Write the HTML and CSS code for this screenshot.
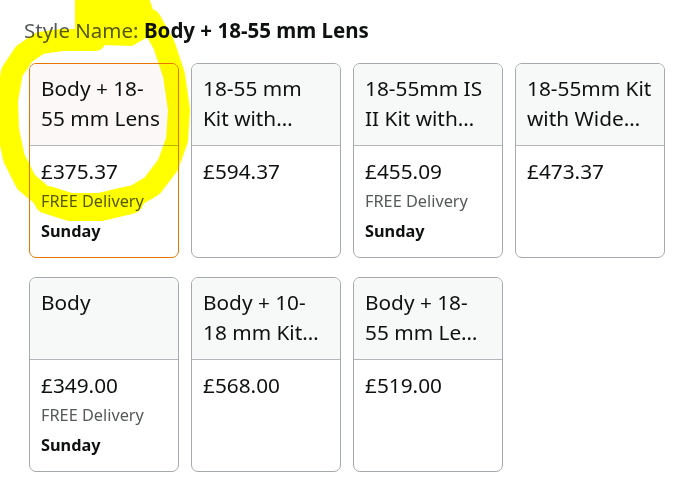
FILE: index.html
```html
<!DOCTYPE html>
<html lang="en">
<head>
<meta charset="utf-8">
<title>Style Name</title>
<link rel="stylesheet" href="styles.css">
</head>
<body>
<div class="page">
  <div class="label"><span class="label-key">Style Name: </span><span class="label-val">Body + 18-55 mm Lens</span></div>
  <div class="grid">
    <div class="card selected">
      <div class="card-head"><span class="line">Body + 18-</span><span class="line">55 mm Lens</span></div>
      <div class="card-body"><div class="price">£375.37</div><div class="del">FREE Delivery</div><div class="day">Sunday</div></div>
    </div>
    <div class="card">
      <div class="card-head"><span class="line">18-55 mm</span><span class="line">Kit with…</span></div>
      <div class="card-body"><div class="price">£594.37</div></div>
    </div>
    <div class="card">
      <div class="card-head"><span class="line">18-55mm IS</span><span class="line">II Kit with…</span></div>
      <div class="card-body"><div class="price">£455.09</div><div class="del">FREE Delivery</div><div class="day">Sunday</div></div>
    </div>
    <div class="card">
      <div class="card-head"><span class="line">18-55mm Kit</span><span class="line">with Wide…</span></div>
      <div class="card-body"><div class="price">£473.37</div></div>
    </div>
    <div class="card">
      <div class="card-head"><span class="line">Body</span></div>
      <div class="card-body"><div class="price">£349.00</div><div class="del">FREE Delivery</div><div class="day">Sunday</div></div>
    </div>
    <div class="card">
      <div class="card-head"><span class="line">Body + 10-</span><span class="line">18 mm Kit…</span></div>
      <div class="card-body"><div class="price">£568.00</div></div>
    </div>
    <div class="card">
      <div class="card-head"><span class="line">Body + 18-</span><span class="line">55 mm Le…</span></div>
      <div class="card-body"><div class="price">£519.00</div></div>
    </div>
  </div>
  <svg class="scribble" width="200" height="230" viewBox="0 0 200 230">
    <path d="M75 -5 L148 -5 L160 30 L132 46 L75 44 Z" fill="#ffff00"/>
    <polyline points="150,20 164,45 174,75 179,110 177,140 168,165 152,186 128,200 100,206 70,206 45,198 26,182 14,158 8,130 7,100 12,72 24,54 40,43 62,40 95,40" fill="none" stroke="#ffff00" stroke-width="22" stroke-linecap="round" stroke-linejoin="round"/>
    <polyline points="130,200 100,207 70,207 48,200" fill="none" stroke="#ffff00" stroke-width="28" stroke-linecap="round" stroke-linejoin="round"/>
  </svg>
</div>
</body>
</html>
```
FILE: styles.css
```css
html, body {
  margin: 0;
  padding: 0;
  background: #ffffff;
}
.page {
  position: relative;
  width: 693px;
  height: 482px;
  padding: 18px 0 0 24px;
  box-sizing: border-box;
  font-family: "Noto Sans", "Liberation Sans", Arial, sans-serif;
  color: #0f1111;
  overflow: hidden;
}
.label {
  font-size: 20.5px;
  line-height: 24px;
  height: 24px;
}
.label-key {
  color: #565959;
}
.label-val {
  font-weight: 700;
  color: #0f1111;
}
.grid {
  display: flex;
  flex-wrap: wrap;
  gap: 19px 12px;
  margin-top: 21px;
  margin-left: 5px;
  width: 640px;
}
.card {
  width: 150px;
  height: 195px;
  box-sizing: border-box;
  border: 1px solid #a6a9ad;
  border-radius: 7px;
  overflow: hidden;
  display: flex;
  flex-direction: column;
  background: #ffffff;
}
.card.selected {
  border-color: #e77600;
}
.card-head {
  height: 82px;
  box-sizing: border-box;
  padding: 9px 4px 0 11px;
  background: #f7f8f8;
  border-bottom: 1px solid #b5b8bb;
  display: flex;
  flex-direction: column;
  font-size: 20.8px;
  line-height: 30px;
  color: #0f1111;
}
.card.selected .card-head {
  background: #fbf8f7;
}
.line {
  white-space: nowrap;
}
.card-body {
  padding: 10px 4px 0 11px;
  display: flex;
  flex-direction: column;
}
.price {
  font-size: 20.8px;
  line-height: 30px;
  color: #0f1111;
}
.del {
  font-size: 16.3px;
  line-height: 30px;
  color: #565959;
}
.day {
  font-size: 16.3px;
  line-height: 30px;
  font-weight: 700;
  color: #0f1111;
}
.scribble {
  position: absolute;
  left: 0;
  top: 0;
  mix-blend-mode: multiply;
  pointer-events: none;
}
```
